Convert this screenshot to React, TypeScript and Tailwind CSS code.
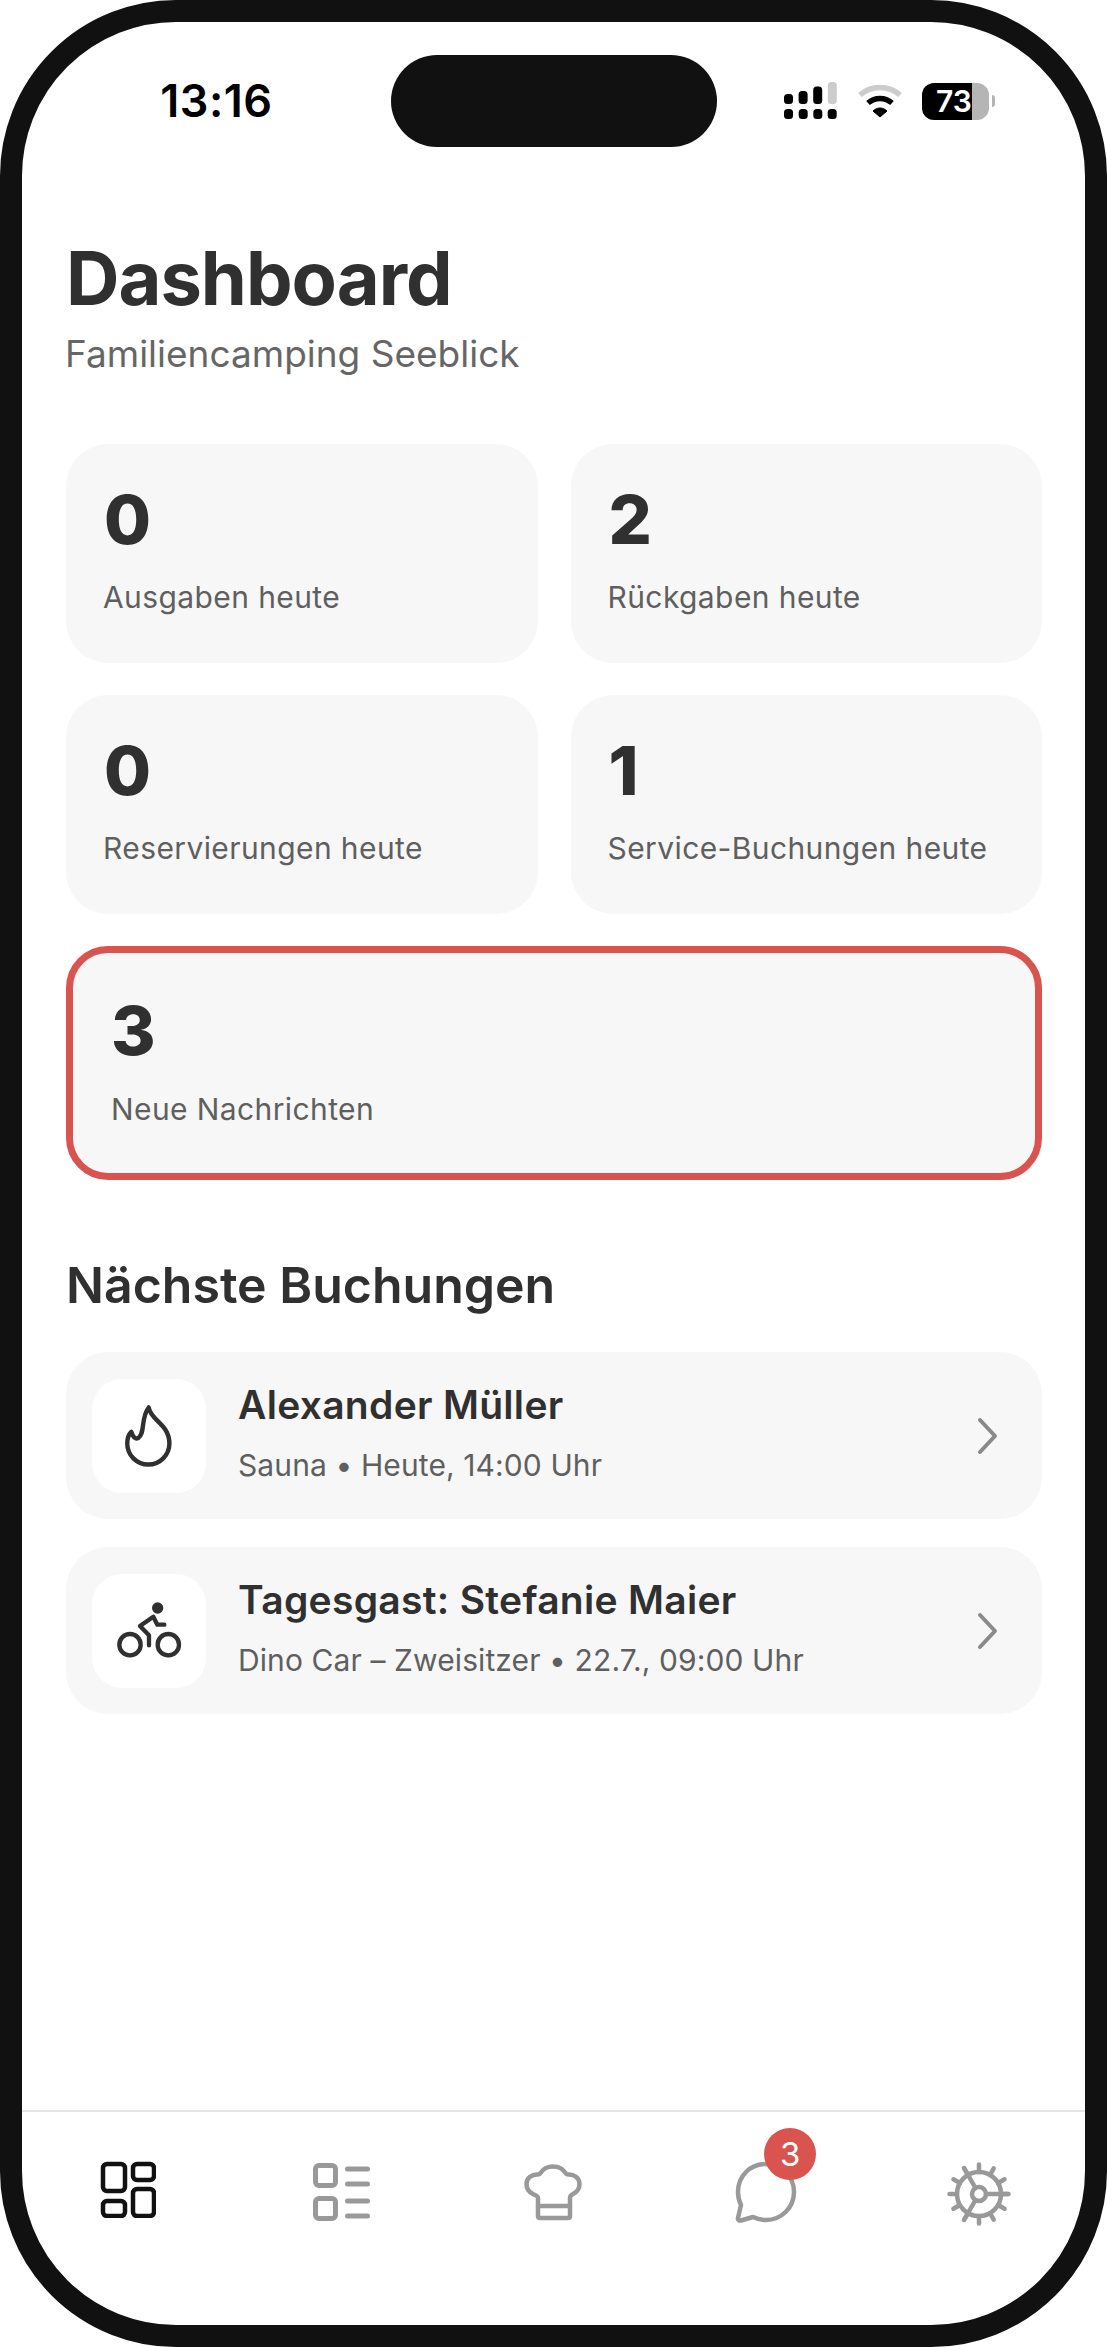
import React from "react";

const font = { fontFamily: "Inter, 'Noto Sans', sans-serif" };

function Signal() {
  const xs = [0, 14.7, 29.3, 43.7];
  return (
    <svg width="54" height="38" viewBox="0 0 54 38" className="block">
      {[{ x: 0, y: 12, h: 10, c: "#000" }, { x: 14.6, y: 9, h: 13, c: "#000" }, { x: 29.2, y: 4.5, h: 17.5, c: "#000" }, { x: 43.8, y: 0, h: 22, c: "#ccc" }].map((b, i) => (
        <rect key={i} x={b.x} y={b.y} width="9" height={b.h} rx="3.5" fill={b.c} />
      ))}
      {xs.map((x, i) => (
        <rect key={i + 10} x={x} y={27} width="9" height="10" rx="3.5" fill="#000" />
      ))}
    </svg>
  );
}

function Wifi() {
  return (
    <svg width="46" height="38" viewBox="0 0 46 38" className="block">
      <path d="M3 13 C14 3 32 3 43 13" fill="none" stroke="#ccc" strokeWidth="5.5" />
      <path d="M11 21 C18 15 28 15 35 21" fill="none" stroke="#000" strokeWidth="5.5" />
      <path d="M16 29 C20 25 26 25 30 29 L23 35 Z" fill="#000" strokeLinejoin="round" stroke="#000" strokeWidth="1" />
    </svg>
  );
}

function Battery() {
  return (
    <div className="flex items-center">
      <div className="relative flex h-[37px] w-[67px] items-stretch overflow-hidden rounded-[12px]">
        <div className="w-[50px] bg-black" />
        <div className="flex-1 bg-[#b5b5b5]" />
        <span className="absolute left-[14px] top-0 text-[30px] font-semibold leading-[37px] text-white">73</span>
      </div>
      <div className="ml-[3px] h-[12px] w-[3px] rounded-r-full bg-[#b5b5b5]" />
    </div>
  );
}

function StatCard({ n, label }: { n: string; label: string }) {
  return (
    <div className="h-[219px] rounded-[42px] bg-[#f7f7f7] pl-[38px] pt-[40px]">
      <div className="text-[68px] font-extrabold leading-[70px] text-[#303030]">{n}</div>
      <div className="-ml-px mt-[25px] text-[30px] leading-[36px] tracking-[0.4px] text-[#5f5f5f]">{label}</div>
    </div>
  );
}

function Flame() {
  return (
    <svg width="54" height="68" viewBox="219 190 158 200" fill="none" stroke="#303030" strokeWidth="13" strokeLinejoin="round" strokeLinecap="round">
      <path d="M297 206 C303 245 358 255 358 312 A61 61 0 0 1 234 312 C234 300 236 288 246 278 C250 292 258 300 266 296 C288 282 272 240 297 206 Z" />
    </svg>
  );
}

function Bike() {
  return (
    <svg width="66" height="58" viewBox="198 788 198 174" fill="none" stroke="#303030" strokeWidth="13" strokeLinecap="round" strokeLinejoin="round">
      <circle cx="323" cy="806" r="17" fill="#303030" stroke="none" />
      <circle cx="240" cy="916" r="32" />
      <circle cx="355" cy="916" r="32" />
      <path d="M297 918 V888 L270 860 L310 832 L322 856 H343" />
    </svg>
  );
}

function Booking({ icon, name, sub }: { icon: React.ReactNode; name: string; sub: string }) {
  return (
    <div className="flex h-[167px] items-center rounded-[42px] bg-[#f7f7f7] pl-[26px] pr-[41px]">
      <div className="flex h-[114px] w-[114px] shrink-0 items-center justify-center rounded-[30px] bg-white">{icon}</div>
      <div className="ml-[32px] flex-1 pb-[6px]">
        <div className="text-[39px] font-semibold leading-[46px] tracking-[0.3px] text-[#303030]">{name}</div>
        <div className="mt-[19px] text-[30px] leading-[36px] tracking-[0.1px] text-[#5f5f5f]">{sub}</div>
      </div>
      <svg width="26" height="40" viewBox="0 0 26 40" fill="none" stroke="#8a8a8a" strokeWidth="4" strokeLinecap="round" strokeLinejoin="round">
        <path d="M5 4 L20 20 L5 36" />
      </svg>
    </div>
  );
}

function NavDashboard() {
  return (
    <svg width="56" height="57" viewBox="0 0 56 57" fill="none" stroke="#111" strokeWidth="4.5">
      <rect x="3" y="3" width="22" height="27" rx="4" />
      <rect x="33" y="3" width="21" height="16" rx="4" />
      <rect x="3" y="40" width="22" height="15" rx="4" />
      <rect x="33" y="28" width="21" height="27" rx="4" />
    </svg>
  );
}

function NavList() {
  return (
    <svg width="60" height="62" viewBox="0 0 60 62" fill="none" stroke="#999" strokeWidth="5" strokeLinecap="round">
      <rect x="4.5" y="4.5" width="20" height="20" rx="3.5" />
      <rect x="4.5" y="37.5" width="20" height="20" rx="3.5" />
      <path d="M36.5 8 H56.5 M36.5 23 H56.5 M36.5 40 H56.5 M36.5 55 H56.5" />
    </svg>
  );
}

function NavHat() {
  return (
    <svg width="58" height="60" viewBox="0 -2 58 60" fill="none" stroke="#999" strokeWidth="4.5" strokeLinejoin="round" strokeLinecap="round">
      <path d="M14 35 V53 Q14 55 16 55 H44 Q46 55 46 53 V35 C46 33 47 32 49 31 C53 29 55.5 25 55.5 21 C55.5 15 50 11 44 11.5 C43 11.5 42 11 41.5 10 C39 6 34 3.5 29 3.5 C24 3.5 19 6 16.5 10 C16 11 15 11.5 14 11.5 C8 11 2.5 15 2.5 21 C2.5 25 5 29 9 31 C11 32 14 33 14 35 Z" />
      <path d="M14 43 H46" />
    </svg>
  );
}

function NavChat() {
  return (
    <svg width="62" height="62" viewBox="0 0 62 62" fill="none" stroke="#999" strokeWidth="4.5" strokeLinejoin="round">
      <path d="M31 3 C46 3 59 15 59 31 C59 47 46 59 31 59 C26 59 22 58 18 56 L6 59.5 C4 60 2.5 58.5 3 57 L6 44 C4 40 3 36 3 31 C3 15 15 3 31 3 Z" />
    </svg>
  );
}

function NavGear() {
  const angles = Array.from({ length: 12 }, (_, i) => i * 30);
  return (
    <svg width="66" height="66" viewBox="-33 -33 66 66" fill="none" stroke="#999" strokeWidth="4.5" strokeLinecap="round">
      <circle r="22" />
      <circle r="7" />
      {angles.map((a) => {
        const r = (a * Math.PI) / 180;
        return <line key={a} x1={Math.cos(r) * 22} y1={Math.sin(r) * 22} x2={Math.cos(r) * 29.5} y2={Math.sin(r) * 29.5} />;
      })}
      <path d="M7 0 H29 M-3.5 -6 L-15 -26 M-3.5 6 L-15 26" />
    </svg>
  );
}

export default function App() {
  return (
    <div className="h-[2347px] w-[1107px] overflow-hidden bg-white" style={font}>
      <div className="flex h-full flex-col overflow-hidden rounded-[176px] border-[22px] border-[#111111] bg-white">
        <div className="flex h-[125px] shrink-0 items-start pt-[33px]">
          <div className="flex h-[92px] w-[369px] items-center justify-center pl-[20px] text-[45px] font-semibold tracking-[0.5px] text-black">13:16</div>
          <div className="h-[92px] w-[326px] rounded-full bg-[#111111]" />
          <div className="ml-[67px] flex h-[92px] items-center gap-[19px]">
            <Signal />
            <Wifi />
            <Battery />
          </div>
        </div>

        <div className="flex flex-1 flex-col pl-[44px] pr-[43px]">
          <h1 className="mt-[91px] text-[74px] font-bold leading-[80px] tracking-[-1px] text-[#303030]">Dashboard</h1>
          <p className="-ml-px mt-[14px] text-[37px] leading-[44px] text-[#666666]">Familiencamping Seeblick</p>

          <div className="mt-[68px] grid grid-cols-2 gap-x-[33px] gap-y-[32px]">
            <StatCard n="0" label="Ausgaben heute" />
            <StatCard n="2" label="Rückgaben heute" />
            <StatCard n="0" label="Reservierungen heute" />
            <StatCard n="1" label="Service-Buchungen heute" />
          </div>

          <div className="mt-[32px] h-[234px] rounded-[42px] border-[7px] border-[#d9534f] bg-[#f7f7f7] pl-[38px] pt-[42px]">
            <div className="text-[68px] font-extrabold leading-[70px] text-[#303030]">3</div>
            <div className="mt-[26px] text-[30px] leading-[36px] tracking-[0.4px] text-[#5f5f5f]">Neue Nachrichten</div>
          </div>

          <h2 className="mt-[75px] text-[50px] font-semibold leading-[60px] text-[#303030]">Nächste Buchungen</h2>

          <div className="mt-[37px] flex flex-col gap-[28px]">
            <Booking icon={<Flame />} name="Alexander Müller" sub="Sauna • Heute, 14:00 Uhr" />
            <Booking icon={<Bike />} name="Tagesgast: Stefanie Maier" sub="Dino Car – Zweisitzer • 22.7., 09:00 Uhr" />
          </div>
        </div>

        <nav className="flex h-[215px] shrink-0 items-start border-t-2 border-[#e5e5e5] pt-[49px]">
          <div className="flex flex-1 justify-center"><NavDashboard /></div>
          <div className="flex flex-1 justify-center"><NavList /></div>
          <div className="flex flex-1 justify-center"><NavHat /></div>
          <div className="flex flex-1 justify-center">
            <div className="relative">
              <NavChat />
              <span className="absolute -top-[33px] left-[29px] flex h-[52px] w-[52px] items-center justify-center rounded-full bg-[#d9534f] text-[33px] leading-none text-white">3</span>
            </div>
          </div>
          <div className="flex flex-1 justify-center"><NavGear /></div>
        </nav>
      </div>
    </div>
  );
}
